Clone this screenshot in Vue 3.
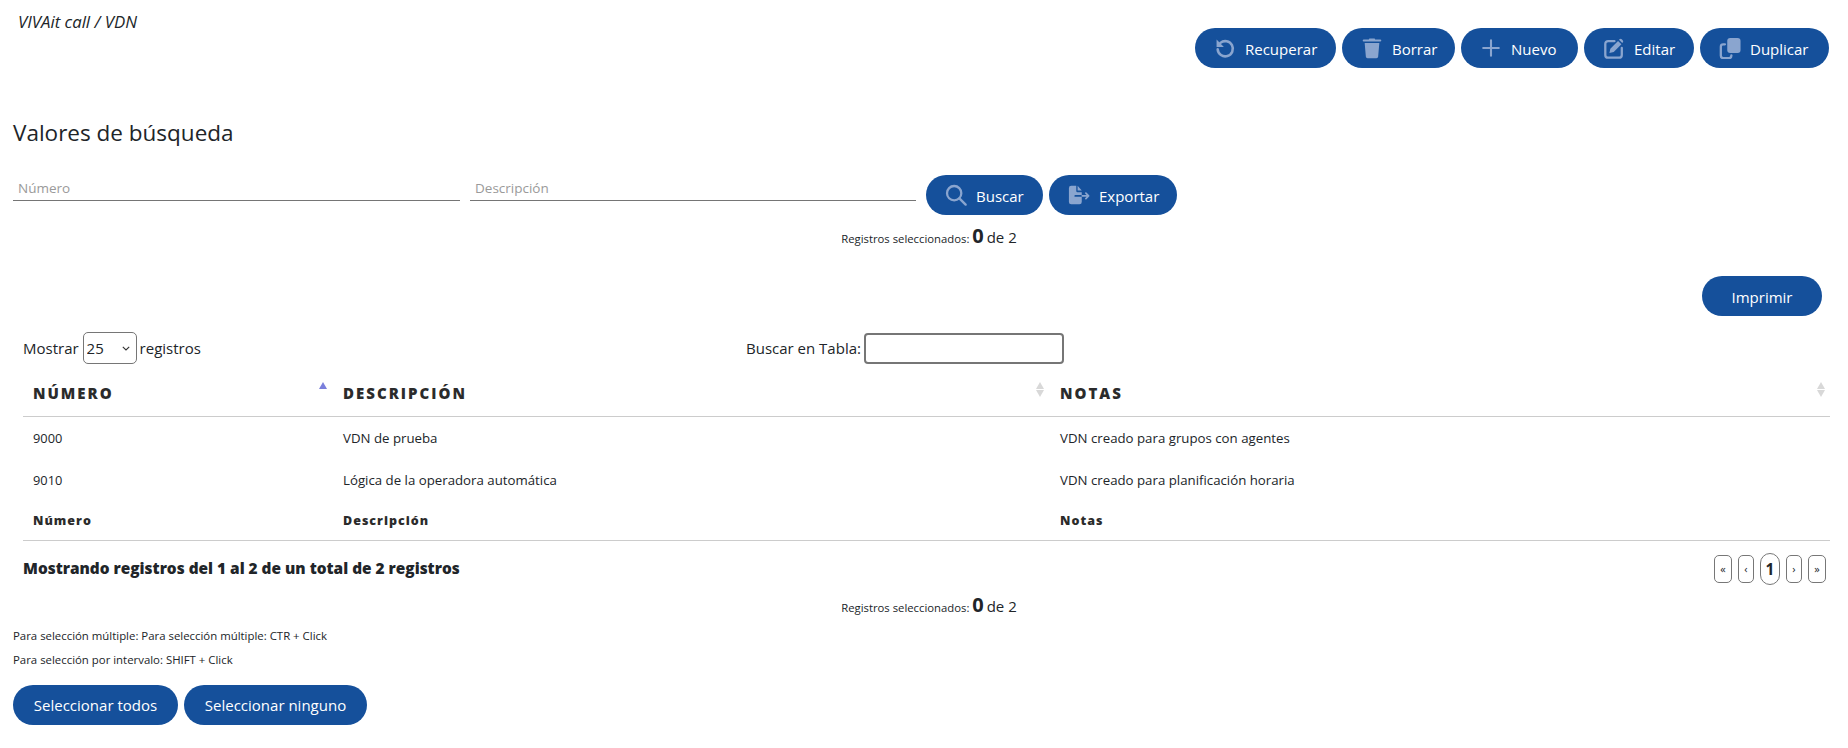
<script setup>
const rows = [
  { num: '9000', desc: 'VDN de prueba', notes: 'VDN creado para grupos con agentes' },
  { num: '9010', desc: 'Lógica de la operadora automática', notes: 'VDN creado para planificación horaria' }
]
const pages = [
  { t: '«' }, { t: '‹' }, { t: '1', active: true }, { t: '›' }, { t: '»' }
]
</script>

<template>
  <div class="page">
    <header class="top">
      <div class="crumb">VIVAit call / VDN</div>
      <div class="actions">
        <button class="btn b-rec">
          <svg class="ico" viewBox="0 0 24 24" fill="none" stroke-width="2.8"><path d="M7 6.400A8.300 8.300 0 1 1 4 13.500" stroke-linecap="round"/><path class="solid" d="M2.800 2.800v8h8z"/></svg>
          Recuperar
        </button>
        <button class="btn b-bor">
          <svg class="ico" viewBox="0 0 24 24"><path class="solid" d="M3 2.700h5.500l.6-1.200h5.800l.6 1.200H21a1 1 0 0 1 0 2.300H3a1 1 0 0 1 0-2.300zM4 6.500h16l-1.300 15a1.800 1.800 0 0 1-1.800 1.600H7.100a1.800 1.800 0 0 1-1.800-1.600z"/></svg>
          Borrar
        </button>
        <button class="btn b-nue">
          <svg class="ico" viewBox="0 0 24 24" fill="none" stroke-width="2.300"><path d="M12 3.500v17M3.500 12h17" stroke-linecap="round"/></svg>
          Nuevo
        </button>
        <button class="btn b-edi">
          <svg class="ico" viewBox="0 0 24 24" fill="none" stroke-width="2.500"><path d="M12.500 4.500H5.500a3 3 0 0 0-3 3V19.500a3 3 0 0 0 3 3h12a3 3 0 0 0 3-3V12" stroke-linecap="round"/><path class="solid" d="M8 12.700 16.400 4.300l3.700 3.700-8.400 8.400-4.700 1zM18 2.500a1.800 1.800 0 0 1 2.500 0l1 1a1.800 1.800 0 0 1 0 2.500l-.5.600-3.600-3.600z"/></svg>
          Editar
        </button>
        <button class="btn b-dup">
          <svg class="ico" viewBox="0 0 24 24" fill="none" stroke-width="2.500"><rect class="solid" x="9" y="1" width="14.500" height="16.500" rx="3.200"/><path d="M6.500 8H4.500A2.500 2.500 0 0 0 2 10.500v10A2.500 2.500 0 0 0 4.500 23h6.500a2.500 2.500 0 0 0 2.500-2.500V20" stroke-linecap="round"/></svg>
          Duplicar
        </button>
      </div>
    </header>

    <h2 class="title">Valores de búsqueda</h2>

    <div class="filters">
      <input class="line-input" placeholder="Número" />
      <input class="line-input" placeholder="Descripción" />
      <button class="btn b-bus">
        <svg class="ico" viewBox="0 0 24 24" fill="none" stroke-width="2.500"><circle cx="10" cy="10" r="7.800"/><path d="m15.700 15.700 6.800 6.800" stroke-linecap="round"/></svg>
        Buscar
      </button>
      <button class="btn b-exp">
        <svg class="ico" viewBox="0 0 24 24" fill="none" stroke-width="1.800"><path class="solid" d="M1 4.500A2.500 2.500 0 0 1 3.500 2H9v5.500A1.500 1.500 0 0 0 10.500 9H15v3H8a1 1 0 0 0 0 2h7v5.500A2.500 2.500 0 0 1 12.500 22h-9A2.500 2.500 0 0 1 1 19.500zM10.500 2 15 7h-4.500z"/><path d="M15.500 13H22.500m-3-3 3 3-3 3" stroke-linecap="round" stroke-linejoin="round"/></svg>
        Exportar
      </button>
    </div>

    <p class="selected first">Registros seleccionados: <b>0</b> <span>de 2</span></p>

    <div class="print-row"><button class="btn print">Imprimir</button></div>

    <div class="table-wrap">
      <div class="controls">
        <label class="show">
          <span>Mostrar</span>
          <span class="size-wrap">
            <select class="size"><option>25</option><option>50</option></select>
            <svg class="chev" viewBox="0 0 8 5" fill="none"><path d="M.8.8 4 4 7.200.8"/></svg>
          </span>
          <span>registros</span>
        </label>
        <label class="table-search">
          <span>Buscar en Tabla:</span>
          <input class="search-box" />
        </label>
      </div>

      <table class="grid">
        <colgroup><col class="c1" /><col class="c2" /><col class="c3" /></colgroup>
        <thead>
          <tr>
            <th>NÚMERO<span class="sort asc"></span></th>
            <th>DESCRIPCIÓN<span class="sort"></span></th>
            <th>NOTAS<span class="sort"></span></th>
          </tr>
        </thead>
        <tbody>
          <tr v-for="r in rows" :key="r.num">
            <td>{{ r.num }}</td>
            <td>{{ r.desc }}</td>
            <td>{{ r.notes }}</td>
          </tr>
        </tbody>
        <tfoot>
          <tr><th>Número</th><th>Descripción</th><th>Notas</th></tr>
        </tfoot>
      </table>

      <div class="info-row">
        <div class="info">Mostrando registros del 1 al 2 de un total de 2 registros</div>
        <div class="pager">
          <button v-for="p in pages" :key="p.t" class="pg" :class="{ active: p.active }">{{ p.t }}</button>
        </div>
      </div>
    </div>

    <p class="selected second">Registros seleccionados: <b>0</b> <span>de 2</span></p>

    <p class="help h1">Para selección múltiple: Para selección múltiple: CTR + Click</p>
    <p class="help h2">Para selección por intervalo: SHIFT + Click</p>

    <div class="bottom">
      <button class="btn wide">Seleccionar todos</button>
      <button class="btn wide">Seleccionar ninguno</button>
    </div>
  </div>
</template>

<style scoped>
.page {
  width: 1848px;
  height: 748px;
  box-sizing: border-box;
  padding: 0 13px;
  overflow: hidden;
  font-family: "Open Sans", "Noto Sans", sans-serif;
  color: #212529;
  background: #fff;
}
.top { display: flex; justify-content: space-between; height: 111px; }
.crumb { padding: 12px 0 0 5px; font-size: 16.800px; line-height: 20px; font-style: italic; }
.actions { display: flex; gap: 6px; padding: 28px 6px 0 0; align-items: flex-start; }
.btn {
  display: inline-flex; align-items: center; justify-content: flex-start; gap: 9px;
  height: 40px; box-sizing: border-box; padding: 2px 0 0 19px; border: 0; border-radius: 20px;
  background: #15509b; color: #fff;
  font: 400 15px "Open Sans", "Noto Sans", sans-serif;
  white-space: nowrap;
}
.b-rec { width: 141px; }
.b-bor { width: 113px; }
.b-nue { width: 117px; }
.b-edi { width: 110px; }
.b-dup { width: 129px; }
.b-bus { width: 117px; }
.b-exp { width: 128px; }
.ico { width: 22px; height: 22px; flex: none; stroke: #8aa5cf; margin-top: -2px; }
.ico .solid { fill: #8aa5cf; stroke: none; }
.title { margin: 0; font-size: 22.500px; font-weight: 400; line-height: 44px; }
.filters { display: flex; gap: 10px; margin-top: 20px; height: 40px; }
.filters .btn + .btn { margin-left: -4px; }
.line-input {
  width: 447px; height: 26px; box-sizing: border-box; margin: 0; padding: 3px 0 2px 5px;
  border: 0; border-bottom: 1px solid #757575; outline: 0; background: transparent;
  font: 400 13.500px "Open Sans", sans-serif;
}
.line-input::placeholder { color: #9a9a9a; opacity: 1; }
.line-input + .line-input { width: 446px; }
.selected { margin: 0; text-align: center; font-size: 11.300px; line-height: 24px; }
.selected b { font-size: 20px; font-weight: 700; }
.selected span { font-size: 15px; }
.first { margin-top: 9px; margin-left: 5px; width: 1822px; }
.print-row { display: flex; justify-content: flex-end; padding: 25px 13px 0 0; }
.print { width: 120px; padding: 2px 0 0; justify-content: center; }
.table-wrap { padding: 0 5px 0 10px; }
.controls { display: flex; margin-top: 16px; height: 32px; align-items: center; font-size: 15px; }
.show { width: 723px; display: flex; align-items: center; gap: 3px; }
.table-search { display: flex; align-items: center; gap: 3px; }
.size-wrap { position: relative; display: block; }
.size {
  display: block; width: 54px; height: 32px; box-sizing: border-box; margin: 0 0 0 1px; padding: 0 0 0 3px;
  appearance: none; border: 1px solid #767676; border-radius: 5px; background: #fff; color: #212529;
  font: 400 15px "Open Sans", sans-serif;
}
.chev { position: absolute; left: 40px; top: 14px; width: 8px; height: 5px; stroke: #333; stroke-width: 1.100; pointer-events: none; }
.search-box {
  width: 200px; height: 31px; box-sizing: border-box; margin: 0;
  border: 2px solid #767676; border-radius: 4px; outline: 0; background: #fff;
}
.grid { width: 1807px; border-collapse: collapse; table-layout: fixed; }
.c1 { width: 310px; }
.c2 { width: 717px; }
.c3 { width: 780px; }
thead th {
  position: relative; height: 52px; padding: 6px 10px 0; text-align: left; box-sizing: border-box;
  border-bottom: 1px solid #ccc; font-size: 15px; font-weight: 800; letter-spacing: 2px; color: #2b2b2b;
}
td { height: 42px; padding: 2px 10px 0; box-sizing: border-box; font-size: 13.250px; }
td:first-child { font-size: 12.800px; }
tfoot th {
  height: 40px; padding: 1px 10px 0; text-align: left; box-sizing: border-box; border-bottom: 1px solid #ccc;
  font-size: 12.500px; font-weight: 800; letter-spacing: 1px; color: #2b2b2b;
}
.sort { position: absolute; right: 6px; top: 18px; width: 8px; height: 15px; }
th:nth-child(3) .sort { right: 5px; }
.sort::before, .sort::after {
  content: ""; position: absolute; left: 0; width: 0; height: 0;
  border-left: 4px solid transparent; border-right: 4px solid transparent;
}
.sort::before { top: 0; border-bottom: 7px solid #d8d8d8; }
.sort::after { top: 8px; border-top: 7px solid #d8d8d8; }
.sort.asc::before { border-bottom-color: #7a7fdc; }
.sort.asc::after { display: none; }
.info-row { display: flex; justify-content: space-between; align-items: center; height: 53px; box-sizing: border-box; padding-top: 3px; }
.info { font-size: 15.400px; font-weight: 800; color: #212529; }
.pager { display: flex; gap: 6px; align-items: center; padding-right: 4px; }
.pg {
  width: 18px; height: 28px; padding: 0; box-sizing: border-box;
  border: 1px solid #777; border-radius: 5px; background: #fff; color: #212529;
  font: 400 11px "Open Sans", sans-serif;
}
.pg:nth-child(2), .pg:nth-child(4) { width: 16px; }
.pg.active {
  width: 20px; height: 32px; border-radius: 10px; font-size: 15.500px; font-weight: 700; color: #212529;
}
.second { margin-top: -1px; margin-left: 5px; width: 1822px; }
.help { margin: 0; font-size: 11.400px; line-height: 24px; }
.h1 { margin-top: 4px; }
.bottom { display: flex; gap: 6px; margin-top: 13px; }
.wide { font-size: 15px; padding: 0; justify-content: center; }
.wide:first-child { width: 165px; }
.wide:last-child { width: 183px; }
</style>
